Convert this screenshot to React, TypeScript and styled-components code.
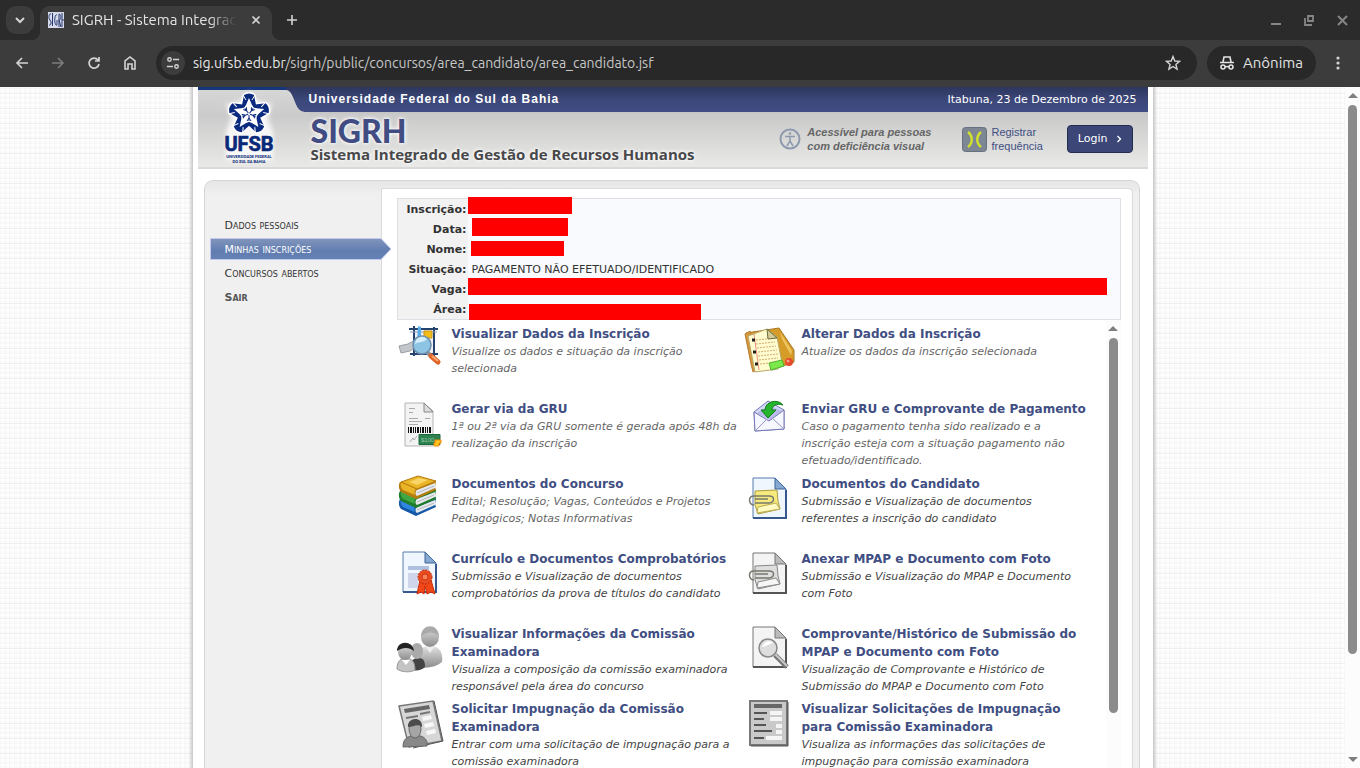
import React from 'react';
import styled, { createGlobalStyle, css } from 'styled-components';

const GlobalStyle = createGlobalStyle`
  * { box-sizing: border-box; }
  body { margin: 0; overflow: hidden; }
  button, input { font: inherit; margin: 0; }
`;

const ui = `Ubuntu, 'Noto Sans', sans-serif`;
const verdana = `Verdana, 'DejaVu Sans', sans-serif`;
const arial = `'Liberation Sans', Arial, sans-serif`;

const Window = styled.div`
  display: flex;
  flex-direction: column;
  height: 100vh;
  background: #3c3c3c;
`;

/* ---------- browser frame ---------- */

const TabStrip = styled.div`
  display: flex;
  align-items: flex-end;
  flex: none;
  height: 40px;
  padding: 0 4px 0 6px;
  background: #2b2b2b;
  font: 15px/20px ${ui};
`;

const IconButton = styled.button<{ $size?: number; $filled?: boolean; $color?: string }>`
  display: grid;
  place-items: center;
  flex: none;
  width: ${p => p.$size ?? 28}px;
  height: ${p => p.$size ?? 28}px;
  padding: 0;
  border: 0;
  border-radius: 10px;
  background: ${p => (p.$filled ? '#3c3c3c' : 'transparent')};
  color: ${p => p.$color ?? '#d4d4d4'};
`;

const StripCell = styled.div`
  display: flex;
  align-items: center;
  height: 40px;
`;

const Tab = styled.div`
  position: relative;
  display: flex;
  align-items: center;
  gap: 8px;
  width: 232px;
  height: 34px;
  margin: 0 6px;
  padding: 0 4px 6px 8px;
  border-radius: 10px 10px 0 0;
  background: #3c3c3c;
  color: #e3e3e3;

  &::before, &::after {
    content: '';
    position: absolute;
    bottom: 0;
    width: 10px;
    height: 10px;
  }
  &::before { left: -10px; background: radial-gradient(circle at 0 0, #2b2b2b 10px, #3c3c3c 11px); }
  &::after { right: -10px; background: radial-gradient(circle at 100% 0, #2b2b2b 10px, #3c3c3c 11px); }
`;

const TabTitle = styled.span`
  flex: 1;
  overflow: hidden;
  white-space: nowrap;
  mask-image: linear-gradient(90deg, #000 84%, transparent);
`;

const WindowButtons = styled(StripCell)`
  gap: 5px;
  margin-left: auto;
`;

const Toolbar = styled.div`
  display: flex;
  align-items: center;
  flex: none;
  gap: 8px;
  height: 47px;
  padding: 0 8px 2px;
  background: #3c3c3c;
  font: 14px/20px ${ui};
`;

const AddressBar = styled.div`
  display: flex;
  align-items: center;
  flex: 1;
  height: 34px;
  margin: 0 2px 0 4px;
  padding: 0 10px 0 5px;
  border-radius: 17px;
  background: #282828;
`;

const SiteButton = styled(IconButton)`
  width: 24px;
  height: 24px;
  border-radius: 12px;
`;

const Url = styled.span`
  flex: 1;
  margin-left: 8px;
  color: #c7c7c7;
  b { color: #e8e8e8; font-weight: 400; }
`;

const Incognito = styled.button`
  display: flex;
  align-items: center;
  gap: 8px;
  height: 34px;
  padding: 0 13px 0 12px;
  border: 0;
  border-radius: 17px;
  background: #282828;
  color: #e3e3e3;
  font-size: 15px;
`;

/* ---------- scroll bars ---------- */

const ScrollTrack = styled.div`
  display: flex;
  flex-direction: column;
  align-items: center;
  flex: none;
  width: 15px;
  padding: 6px 0;
  background: #fcfcfc;
`;

const ScrollThumb = styled.div<{ $share: number }>`
  flex: none;
  width: 9px;
  height: ${p => p.$share}%;
  margin: 7px 0 auto;
  border-radius: 5px;
  background: #8b8b8b;
`;

const Arrow = styled.div<{ $down?: boolean }>`
  border: 5px solid transparent;
  ${p => p.$down
    ? css`border-top-color: #7f7f7f; border-bottom: 0;`
    : css`border-bottom-color: #7f7f7f; border-top: 0;`}
`;

/* ---------- page ---------- */

const Page = styled.div`
  display: flex;
  flex: 1;
  min-height: 0;
`;

const Backdrop = styled.div`
  display: flex;
  justify-content: center;
  flex: 1;
  min-width: 0;
  overflow: hidden;
  background:
    repeating-linear-gradient(0deg, transparent 0 14px, rgba(0, 0, 0, .03) 14px 15px),
    repeating-linear-gradient(0deg, rgba(0, 0, 0, .012) 0 2px, transparent 2px 4px, rgba(0, 0, 0, .025) 4px 5px),
    repeating-linear-gradient(90deg, rgba(0, 0, 0, .012) 0 2px, transparent 2px 4px, rgba(0, 0, 0, .025) 4px 5px),
    #fff;
`;

const Sheet = styled.div`
  display: flex;
  flex-direction: column;
  width: 100%;
  max-width: 960px;
  padding: 0 5px;
  background: #fff;
  box-shadow: 0 0 3px 2px #c4c4c4;
`;

const Header = styled.header`
  display: grid;
  grid-template-columns: 111px 1fr;
  flex: none;
  height: 82px;
  border-bottom: 2px solid #dadada;
  background: linear-gradient(#bdbdbd 22px, #c9c9c9 27px, #e9e9e7);
`;

const LogoCorner = styled.svg`
  display: block;
  width: 111px;
  height: 80px;
`;

const HeaderMain = styled.div`
  display: flex;
  flex-direction: column;
  min-width: 0;
`;

const TopBar = styled.div`
  display: flex;
  justify-content: space-between;
  height: 25px;
  padding: 0 11px 0 0;
  background: linear-gradient(#2d365d, #3c4779 50%, #404c83);
  color: #fff;
`;

const University = styled.strong`
  font: bold 12px/25px ${arial};
  letter-spacing: 1px;
`;

const Today = styled.span`
  font: 11px/26px ${verdana};
`;

const Brand = styled.div`
  display: flex;
  align-items: flex-start;
  justify-content: space-between;
  padding: 0 15px 0 2px;
`;

const Titles = styled.div`
  color: #48484a;
  text-shadow: 0 0 3px #fff, 0 0 5px #fff;
  white-space: nowrap;
  h1 { margin: 0; font: 900 32px/38px Lato, sans-serif; color: #404c82; }
  p { margin: -6px 0 0; font: bold 15px/20px 'Open Sans', sans-serif; }
`;

const HeaderLinks = styled.div`
  display: flex;
  align-items: center;
  padding-top: 13px;
`;

const HeaderLink = styled.a<{ $strong?: boolean }>`
  display: flex;
  align-items: center;
  gap: ${p => (p.$strong ? 6 : 4)}px;
  margin-right: ${p => (p.$strong ? 31 : 24)}px;
  font: ${p => (p.$strong ? 'italic bold' : 'normal')} 11px/14px ${arial};
  color: ${p => (p.$strong ? '#666' : '#404e82')};
  text-decoration: none;
  white-space: nowrap;
`;

const LoginButton = styled.button`
  display: flex;
  align-items: center;
  gap: 5px;
  height: 28px;
  padding: 0 7px 0 10px;
  border: 1px solid #222b50;
  border-radius: 4px;
  background: #3c4778;
  color: #fff;
  font: 11px/14px ${verdana};
`;

const Panel = styled.div`
  display: flex;
  flex: 1;
  min-height: 0;
  margin: 11px 8px 0 6px;
  padding: 7px 6px 0 5px;
  border: 1px solid #d4d6d8;
  border-bottom: 0;
  border-radius: 9px 9px 0 0;
  background: linear-gradient(#e6e6e6, #f0f0f0 14px);
`;

const Sidebar = styled.nav`
  flex: none;
  width: 171px;
  padding-top: 26px;
  ul { margin: 0; padding: 0; list-style: none; }
`;

const MenuLink = styled.a<{ $active?: boolean; $strong?: boolean }>`
  display: block;
  position: relative;
  height: 24px;
  padding-left: 15px;
  font: ${p => (p.$strong ? 'bold' : 'normal')} 11px/24px ${verdana};
  font-variant: small-caps;
  color: ${p => (p.$active ? '#fff' : p.$strong ? '#555' : '#333')};
  text-decoration: none;
  svg { position: absolute; left: 0; top: 0; z-index: 0; }
  span { position: relative; }
`;

const Content = styled.main`
  display: flex;
  flex-direction: column;
  flex: 1;
  min-width: 0;
  padding: 9px 11px 0 15px;
  border: 1px solid #d9dadc;
  border-bottom: 0;
  border-radius: 0 5px 0 0;
  background: #fff;
`;

const Details = styled.table`
  flex: none;
  width: 100%;
  border: 1px solid #dcdfe4;
  border-collapse: separate;
  border-spacing: 0;
  background: #f9fafd;
  font: 11px/18px ${verdana};
  color: #333;
  th { width: 70px; padding: 2px 1px 0 0; background: #f2f2f3; text-align: right; }
  td { position: relative; height: 20px; padding: 2px 0 0 4px; }
`;

const Redaction = styled.span<{ $x: number; $y: number; $w: number; $h: number }>`
  position: absolute;
  left: ${p => p.$x}px;
  top: ${p => p.$y}px;
  width: ${p => p.$w}px;
  height: ${p => p.$h}px;
  background: #f00;
`;

const Operations = styled.section`
  display: flex;
  flex: 1;
  min-height: 0;
  margin-left: -4px;
`;

const OperationGrid = styled.div`
  display: grid;
  grid-template-columns: repeat(2, 350px);
  grid-auto-rows: 75px;
  flex: 1;
  min-width: 0;
  padding-top: 5px;
  overflow: hidden;
`;

const Operation = styled.article`
  display: flex;
  gap: 5px;
  padding-right: 2px;
  > svg { flex: none; }
`;

const OperationTitle = styled.h2`
  margin: 0;
  font: bold 12px/18px ${verdana};
  a { color: #404e82; text-decoration: none; }
`;

const Description = styled.p<{ $dark?: boolean }>`
  margin: 0;
  font: italic 11px/17px ${verdana};
  color: ${p => (p.$dark ? '#444' : '#666')};
`;

/* ---------- drawings ---------- */

const Line = ({ d, size = 16, w = 2 }: { d: string; size?: number; w?: number }) => (
  <svg width={size} height={size} viewBox="0 0 16 16" fill="none" stroke="currentColor" strokeWidth={w}>
    <path d={d} />
  </svg>
);

const Art = ({ children }: { children: React.ReactNode }) => (
  <svg width="54" height="50" viewBox="0 0 54 50" aria-hidden="true">{children}</svg>
);

const InspectArt = () => (
  <Art>
    <path d="M21 4h19v24H21z" fill="#eef1f7" />
    <path d="M21 1v30M16 4h29M17 29h28M41 2v30" stroke="#26426f" strokeWidth="2" fill="none" />
    <path d="M17 7h27" stroke="#8d9bb5" />
    <path d="M31 6h8v7h-8z" fill="#f5bd18" stroke="#c8961a" />
    <path d="M25 1l3 1v14l-4 1z" fill="#58aee8" />
    <path d="M6 21l9-2 7-4 4 5-9 6-9 2z" fill="#c3c7cc" stroke="#9aa0a7" />
    <path d="M34 27l5 5" stroke="#8b9095" strokeWidth="4" />
    <path d="M38 31l7 6" stroke="#e0642a" strokeWidth="5" strokeLinecap="round" />
    <path d="M39 31l6 5" stroke="#f9a86e" strokeWidth="2" />
    <circle cx="29" cy="20" r="9" fill="#8dc3e3" stroke="#6b8fac" strokeWidth="1.5" />
    <path d="M22 19a7 7 0 0 1 12-5c-3 4-7 2-12 5z" fill="#d3edfa" />
  </Art>
);

const BillArt = () => (
  <Art>
    <path d="M12 3h19l9 8v35H12z" fill="#f3f3f3" stroke="#b5b5b5" />
    <path d="M31 3v9h9z" fill="#ddd" stroke="#888" />
    <path d="M16 8.500h6M16 12.500h4M16 18.500h9M16 21.500h13M16 24.500h9M32 18.500h5" stroke="#aaa" />
    <path d="M15 27h1v6h-1zM17 27h2v6h-2zM20 27h1v6h-1zM22 27h1v6h-1zM24 27h2v6h-2zM27 27h1v6h-1zM29 27h2v6h-2zM32 27h1v6h-1zM34 27h1v6h-1zM36 27h2v6h-2z" fill="#111" />
    <path d="M17 42l3-4 1 2 3-4" stroke="#aaa" fill="none" />
    <path d="M26 34.500h21v10H26z" fill="#2f8150" stroke="#1b6a3b" />
    <text x="28" y="42" fontFamily="Liberation Sans" fontSize="6" fill="#8cc79e">$100</text>
    <path d="M42 40h6v3h-2v3h-5v-3h1z" fill="#ffc51c" stroke="#f18909" />
  </Art>
);

const BooksArt = () => {
  const book = (y: number, c: string, d: string) => (
    <g transform={`translate(0 ${y})`}>
      <path d="M7 6c-2 3-1 8 1 10l15 7 20-9-1-3 1-6z" fill={d} />
      <path d="M24 14l18-7v5l-18 8c-2-1-2-5 0-6z" fill="#e6e9ec" />
      <path d="M24 17l17-7" fill="none" stroke="#b5b9bd" />
      <path d="M8 6c-1 3 0 6 2 8l12 5c-1-2-1-4 1-6z" fill={c} />
      <path d="M8 6L25 0l18 5-19 8z" fill={c} stroke={d} />
    </g>
  );
  return (
    <Art>
      {book(18, '#2f86e0', '#1558a8')}
      {book(10, '#3fa843', '#1e7c2b')}
      {book(1, '#eab427', '#b57c0f')}
      <path d="M16 7l10-4 9 2-11 5z" fill="#f8d566" />
    </Art>
  );
};

const NotebookArt = () => (
  <Art>
    <path d="M3 8l33-5 15 22v12l-22 8z" fill="#d69c28" stroke="#a5762b" />
    <path d="M37 7l12 19-1 4-9-16z" fill="#eec560" />
    <path d="M2 9l5-3 8 38-5 3-2-8z" fill="#d8973b" stroke="#b57c31" />
    <path d="M5 11l19-7 10 8 5 26-4 6-23 3z" fill="#fffccf" stroke="#b8a66b" />
    <path d="M24 4l1 10 9-1z" fill="#d5cd97" stroke="#666b3a" />
    <path d="M13 15l11-1M13 19l19-2M14 23l19-2M15 27l19-2M15 31l20-2M16 35l19-2M17 39l9-1" stroke="#d8ae72" strokeDasharray="2 1" />
    <path d="M11 9l5 36" stroke="#f19083" />
    <path d="M9 15h3M10 27h3M12 39h3" stroke="#222" strokeWidth="3" />
    <path d="M26 38l13-3 2 6-13 4z" fill="#7ce84b" stroke="#4fb22f" />
    <circle cx="46" cy="37" r="4" fill="#e54a2e" />
    <circle cx="45" cy="36" r="1.500" fill="#f9a08c" />
  </Art>
);

const EnvelopeArt = () => (
  <Art>
    <path d="M11 12L25 1l16 9v19l-29 2z" fill="#d6d8f8" stroke="#7478b4" />
    <path d="M14 13l12-8 13 6-12 9z" fill="#b8bbe8" />
    <path d="M11 12l15 9 15-11v19l-29 2z" fill="#f7f7ff" stroke="#7478b4" />
    <path d="M12 31l12-12M41 29l-12-11" stroke="#9296c9" fill="none" />
    <path d="M40 5C36 0 27 0 23 6l-1 4h-4l7 8 8-8h-4c0-4 4-7 11-5z" fill="#25b42c" stroke="#137c1f" />
  </Art>
);

const FileSheet = ({ gray, top = 2 }: { gray?: boolean; top?: number }) => (
  <g transform={`translate(0 ${top - 2})`}>
    <path d="M10 3h22l11 11v29H10z" fill={gray ? '#f4f4f4' : '#f0f6fd'} stroke={gray ? '#777' : '#5478ad'} />
    <path d="M32 3v11h11z" fill={gray ? '#bbb' : '#86a9d2'} stroke={gray ? '#777' : '#3e659c'} />
    <path d="M43 15v28H10" fill="none" stroke={gray ? '#555' : '#36588e'} strokeWidth="2" />
  </g>
);

const ClipArt = ({ gray }: { gray?: boolean }) => (
  <Art>
    <FileSheet gray={gray} />
    <path d="M12 16l22-1 1 11 2 8-22 5-3-9z" fill={gray ? '#dedede' : '#f5ea7b'} stroke={gray ? '#888' : '#aa9d42'} />
    <path d="M14 38l23-4-4-6-18 4z" fill={gray ? '#f6f6f6' : '#fffac0'} stroke={gray ? '#888' : '#b9ac55'} />
    <path d="M12 28h14c6-1 6-7 0-7H11c-6 0-6 8 0 9M12 24h13" fill="none" stroke="#77796e" strokeWidth="1.500" />
  </Art>
);

const CertificateArt = () => (
  <Art>
    <FileSheet top={1} />
    <path d="M15 16h21v4H15z" fill="#afbfe0" />
    <path d="M15 23h10v15H15z" fill="#cfd5ea" />
    <path d="M27 30l-3 14 4-2 3 2 1-8 2 8 4-2 4 2-4-14z" fill="#f14718" stroke="#c52d0b" />
    <circle cx="32" cy="27" r="7" fill="#e94b20" stroke="#bd2c0c" strokeDasharray="2 1" />
    <circle cx="32" cy="27" r="3" fill="#f58556" stroke="#d23511" />
  </Art>
);

const PeopleArt = () => (
  <Art>
    <defs>
      <linearGradient id="person" x2="0" y2="1"><stop stopColor="#ddd" /><stop offset="1" stopColor="#8d8d8d" /></linearGradient>
    </defs>
    <path d="M22 38c-1-11 5-15 10-16h11c5 2 7 8 6 15-7 6-18 7-27 4z" fill="url(#person)" />
    <path d="M32 21l5 7 5-7z" fill="#eee" />
    <ellipse cx="37" cy="12" rx="9" ry="10" fill="url(#person)" />
    <path d="M28 11c1-13 17-13 18 0-7-5-11-4-18 0z" fill="#aaa" />
    <path d="M17 43c0-8 4-10 9-10s6 4 6 9c-4 4-11 5-15 1z" fill="#444" />
    <ellipse cx="24" cy="26" rx="6" ry="8" fill="#aaa" />
    <path d="M4 44c0-8 4-11 9-11s9 3 9 12c-5 3-14 2-18-1z" fill="#c4c4c4" stroke="#999" />
    <path d="M9 35l4 5 4-5z" fill="#fff" />
    <ellipse cx="12" cy="27" rx="7" ry="8" fill="url(#person)" />
    <path d="M4 26c0-11 16-11 17 0-5-4-11-4-17 0z" fill="#222" />
  </Art>
);

const SearchFileArt = () => (
  <Art>
    <FileSheet gray top={1} />
    <path d="M32 30l12 12" stroke="#777" strokeWidth="5" />
    <path d="M32 29l12 12" stroke="#c9c9c9" strokeWidth="2" />
    <circle cx="25" cy="23" r="9" fill="#ddd" stroke="#888" strokeWidth="1.500" />
    <path d="M19 22c2-6 8-7 11-4-4 1-6 3-11 4z" fill="#fff" />
  </Art>
);

const ProfileArt = () => (
  <Art>
    <path d="M6 6l34-5 9 40-33 6z" fill="#d7d7d7" stroke="#777" strokeWidth="1.500" />
    <path d="M41 1l9 40-30 7" fill="none" stroke="#555" />
    <path d="M11 9l25-4 1 4-25 4z" fill="#666" />
    <path d="M13 18l12-2M27 14l10-2" stroke="#777" strokeWidth="2" />
    <path d="M29 17l9-2 1 4-9 2zM31 24l9-2 1 4-9 2zM33 31l9-2 1 4-9 2z" fill="#f8f8f8" />
    <path d="M10 47c0-8 4-10 8-11h10c5 2 7 6 6 10z" fill="#888" stroke="#666" />
    <ellipse cx="22" cy="29" rx="6" ry="9" fill="#a5a5a5" stroke="#666" />
    <path d="M15 27c-1-10 15-11 14 0-4-4-9 0-14 0z" fill="#4c4c4c" />
  </Art>
);

const FormArt = () => (
  <Art>
    <path d="M7 1h37v44H7z" fill="#c9c9c9" stroke="#777" strokeWidth="2" />
    <path d="M45 2v44H8" fill="none" stroke="#555" />
    <path d="M11 4h28v4H11z" fill="#666" />
    <path d="M11 13h13M11 19h10M11 25h12M11 31h18M11 38h10" stroke="#555" strokeWidth="2" />
    <path d="M27 11h12v4H27zM27 17h12v4H27zM33 24h6v4h-6zM33 30h6v4h-6zM23 36h16v4H23z" fill="#f5f5f5" />
  </Art>
);

const UfsbCorner = () => (
  <LogoCorner viewBox="0 0 111 80" role="img" aria-label="UFSB">
    <defs>
      <linearGradient id="corner" x2="0" y2="1"><stop stopColor="#d8d8d8" /><stop offset=".35" stopColor="#cbcbcb" /><stop offset="1" stopColor="#e9e9e7" /></linearGradient>
      <linearGradient id="bar" x2="0" y2="1"><stop stopColor="#2d365d" /><stop offset=".5" stopColor="#3c4779" /><stop offset="1" stopColor="#404c83" /></linearGradient>
      <filter id="glow"><feGaussianBlur stdDeviation="2" /></filter>
    </defs>
    <path d="M0 0h111v80H0z" fill="url(#corner)" />
    <path d="M88 0h23v25h-2c-6 0-9-2-12-10-3-8-5-12-9-12z" fill="url(#bar)" />
    <path d="M0 0h88v3H0z" fill="#15357d" />
    <path d="M51 4l9 10 14 3-4 14 5 14v28H28V45l5-14-5-14 14-3z" fill="#fff" opacity=".8" filter="url(#glow)" />
    <g transform="translate(51 27)" strokeLinejoin="round">
      {[0, 72, 144, 216, 288].map(a => (
        <path key={a} transform={`rotate(${a})`} d="M-5-19Q0-22 5-19L7-9 0 0-7-9z" fill="#0a2a80" stroke="#fff" strokeWidth="3" />
      ))}
      {[0, 72, 144, 216, 288].map(a => (
        <g key={a} transform={`rotate(${a})`}>
          <path d="M-5-19Q0-22 5-19L7-9 0 0-7-9z" fill="#0a2a80" />
          <path d="M0-16L3-9 5-6 0-2-5-6-3-9z" fill="#fff" />
          <path d="M-6-19L-3-14M6-19L3-14" stroke="#fff" />
        </g>
      ))}
      <circle r="8" fill="#fff" />
      {[0, 72, 144, 216, 288].map(a => (
        <path key={a} transform={`rotate(${a + 36})`} d="M0-1v-6M-2-7l2 3 2-3" stroke="#0a2a80" fill="none" />
      ))}
    </g>
    <text x="51" y="64" textAnchor="middle" fontFamily="Liberation Sans Narrow, Roboto, sans-serif" fontWeight="700" fontSize="20" fill="#082878" stroke="#082878" strokeWidth=".6">UFSB</text>
    <text x="51" y="71" textAnchor="middle" fontFamily="Liberation Sans Narrow, Roboto, sans-serif" fontWeight="700" fontSize="4" fill="#082878">UNIVERSIDADE FEDERAL</text>
    <text x="51" y="76" textAnchor="middle" fontFamily="Liberation Sans Narrow, Roboto, sans-serif" fontWeight="700" fontSize="4" fill="#082878">DO SUL DA BAHIA</text>
  </LogoCorner>
);

/* ---------- data ---------- */

const details = [
  { label: 'Inscrição:', box: [0, -2, 104, 17] },
  { label: 'Data:', box: [4, -1, 96, 18] },
  { label: 'Nome:', box: [3, 2, 93, 15] },
  { label: 'Situação:', text: 'PAGAMENTO NÃO EFETUADO/IDENTIFICADO' },
  { label: 'Vaga:', box: [0, -1, 639, 17] },
  { label: 'Área:', box: [1, 5, 232, 16] },
];

const operations = [
  { art: <InspectArt />, title: 'Visualizar Dados da Inscrição', text: 'Visualize os dados e situação da inscrição selecionada' },
  { art: <NotebookArt />, title: 'Alterar Dados da Inscrição', text: 'Atualize os dados da inscrição selecionada' },
  { art: <BillArt />, title: 'Gerar via da GRU', text: '1ª ou 2ª via da GRU somente é gerada após 48h da realização da inscrição' },
  { art: <EnvelopeArt />, title: 'Enviar GRU e Comprovante de Pagamento', text: 'Caso o pagamento tenha sido realizado e a inscrição esteja com a situação pagamento não efetuado/identificado.' },
  { art: <BooksArt />, title: 'Documentos do Concurso', text: 'Edital; Resolução; Vagas, Conteúdos e Projetos Pedagógicos; Notas Informativas' },
  { art: <ClipArt />, title: 'Documentos do Candidato', text: 'Submissão e Visualização de documentos referentes a inscrição do candidato', dark: true },
  { art: <CertificateArt />, title: 'Currículo e Documentos Comprobatórios', text: 'Submissão e Visualização de documentos comprobatórios da prova de títulos do candidato', dark: true },
  { art: <ClipArt gray />, title: 'Anexar MPAP e Documento com Foto', text: 'Submissão e Visualização do MPAP e Documento com Foto', dark: true },
  { art: <PeopleArt />, title: 'Visualizar Informações da Comissão Examinadora', text: 'Visualiza a composição da comissão examinadora responsável pela área do concurso', dark: true },
  { art: <SearchFileArt />, title: 'Comprovante/Histórico de Submissão do MPAP e Documento com Foto', text: 'Visualização de Comprovante e Histórico de Submissão do MPAP e Documento com Foto', dark: true },
  { art: <ProfileArt />, title: 'Solicitar Impugnação da Comissão Examinadora', text: 'Entrar com uma solicitação de impugnação para a comissão examinadora', dark: true },
  { art: <FormArt />, title: 'Visualizar Solicitações de Impugnação para Comissão Examinadora', text: 'Visualiza as informações das solicitações de impugnação para comissão examinadora', dark: true },
];

const menu = [
  { label: 'Dados pessoais' },
  { label: 'Minhas inscrições', active: true },
  { label: 'Concursos abertos' },
  { label: 'Sair', strong: true },
];

export default function App() {
  return (
    <Window>
      <GlobalStyle />
      <TabStrip>
        <StripCell><IconButton $filled aria-label="Pesquisar guias"><Line d="M4 6l4 4 4-4" /></IconButton></StripCell>
        <Tab>
          <svg width="16" height="16" viewBox="0 0 16 16">
            <path d="M0 0h16v16H0z" fill="#d5d9ea" />
            <path d="M3 2C1 1 0 6 2 8s1 6-1 5M4.500 1v13M9 3C6 1 6 15 9 13V8M11 15V2c3 1 2 6 0 6l2 7M14 1v14M14 8h2" fill="none" stroke="#27386e" />
          </svg>
          <TabTitle>SIGRH - Sistema Integrado</TabTitle>
          <IconButton $size={24} aria-label="Fechar guia"><Line size={14} d="M4 4l8 8M12 4l-8 8" /></IconButton>
        </Tab>
        <StripCell><IconButton aria-label="Nova guia"><Line d="M8 3v10M3 8h10" w={1.6} /></IconButton></StripCell>
        <WindowButtons>
          <IconButton $color="#868686" aria-label="Minimizar"><Line d="M3 12h10" /></IconButton>
          <IconButton $color="#868686" aria-label="Restaurar"><Line d="M7 4h5v5H7zM4 6v7h7" w={1.8} /></IconButton>
          <IconButton $color="#868686" aria-label="Fechar"><Line d="M4 4l9 9M13 4l-9 9" /></IconButton>
        </WindowButtons>
      </TabStrip>
      <Toolbar>
        <IconButton aria-label="Voltar"><Line d="M14 8H3M8 3L3 8l5 5" w={1.6} /></IconButton>
        <IconButton $color="#7c7c7c" aria-label="Avançar"><Line d="M2 8h11M8 3l5 5-5 5" w={1.6} /></IconButton>
        <IconButton aria-label="Recarregar"><Line d="M12 5a5 5 0 1 0 1 4M13 2v4H9" w={1.7} /></IconButton>
        <IconButton aria-label="Início"><Line d="M3 14V6l5-4 5 4v8h-3v-5H6v5z" w={1.6} /></IconButton>
        <AddressBar>
          <SiteButton $filled aria-label="Informações do site">
            <Line d="M2 4a2 2 0 1 0 4 0a2 2 0 1 0-4 0M8 4h7M1 12h7M10 12a2 2 0 1 0 4 0a2 2 0 1 0-4 0" size={14} w={1.6} />
          </SiteButton>
          <Url><b>sig.ufsb.edu.br</b>/sigrh/public/concursos/area_candidato/area_candidato.jsf</Url>
          <IconButton aria-label="Favoritar"><Line d="M8 1.500l1.800 4.500 4.700.4-3.600 3 1.200 4.700L8 11.500l-4.100 2.600 1.200-4.700-3.600-3 4.700-.4z" w={1.4} /></IconButton>
        </AddressBar>
        <Incognito>
          <Line d="M4 7l1-5h6l1 5M1 7.500h14M2 12a2 2 0 1 0 4 0a2 2 0 1 0-4 0M6 12q2-1 4 0a2 2 0 1 0 4 0a2 2 0 1 0-4 0" w={1.6} />
          Anônima
        </Incognito>
        <IconButton aria-label="Menu">
          <svg width="16" height="16" fill="currentColor"><circle cx="8" cy="3" r="1.600" /><circle cx="8" cy="8" r="1.600" /><circle cx="8" cy="13" r="1.600" /></svg>
        </IconButton>
      </Toolbar>

      <Page>
        <Backdrop>
          <Sheet>
            <Header>
              <UfsbCorner />
              <HeaderMain>
                <TopBar>
                  <University>Universidade Federal do Sul da Bahia</University>
                  <Today>Itabuna, 23 de Dezembro de 2025</Today>
                </TopBar>
                <Brand>
                  <Titles>
                    <h1>SIGRH</h1>
                    <p>Sistema Integrado de Gestão de Recursos Humanos</p>
                  </Titles>
                  <HeaderLinks>
                    <HeaderLink $strong href="#acessivel">
                      <svg width="22" height="22" viewBox="0 0 22 22" fill="none" stroke="#8d9aae" strokeWidth="2">
                        <circle cx="11" cy="11" r="9.500" />
                        <circle cx="11" cy="5.500" r="1.200" fill="#8d9aae" stroke="none" />
                        <path d="M6 8.500h10M11 8v5l-3 5M11 13l3 5" strokeWidth="1.500" />
                      </svg>
                      <span>Acessível para pessoas<br />com deficiência visual</span>
                    </HeaderLink>
                    <HeaderLink href="#frequencia">
                      <svg width="25" height="25" viewBox="0 0 25 25">
                        <rect x=".5" y=".5" width="24" height="24" rx="3" fill="#7d8794" stroke="#667080" />
                        <path d="M6 5c5 4 5 11 0 15M19 5c-5 4-5 11 0 15" fill="none" stroke="#d3e12c" strokeWidth="2.400" />
                      </svg>
                      <span>Registrar<br />frequência</span>
                    </HeaderLink>
                    <LoginButton>Login<Line size={12} d="M6 4l4 4-4 4" w={1.8} /></LoginButton>
                  </HeaderLinks>
                </Brand>
              </HeaderMain>
            </Header>

            <Panel>
              <Sidebar>
                <ul>
                  {menu.map(m => (
                    <li key={m.label}>
                      <MenuLink href="#menu" $active={m.active} $strong={m.strong}>
                        {m.active && (
                          <svg width="182" height="22" viewBox="0 0 182 22">
                            <defs><linearGradient id="sel" x2="0" y2="1"><stop stopColor="#8296bc" /><stop offset=".6" stopColor="#617cb0" /><stop offset="1" stopColor="#6681b4" /></linearGradient></defs>
                            <path d="M.5 .5H171l10 10.500-10 10.500H.5z" fill="url(#sel)" stroke="#c3c9ee" />
                          </svg>
                        )}
                        <span>{m.label}</span>
                      </MenuLink>
                    </li>
                  ))}
                </ul>
              </Sidebar>
              <Content>
                <Details>
                  <tbody>
                    {details.map(d => (
                      <tr key={d.label}>
                        <th scope="row">{d.label}</th>
                        <td>
                          {d.text}
                          {d.box && <Redaction $x={d.box[0]} $y={d.box[1]} $w={d.box[2]} $h={d.box[3]} />}
                        </td>
                      </tr>
                    ))}
                  </tbody>
                </Details>
                <Operations>
                  <OperationGrid>
                    {operations.map(o => (
                      <Operation key={o.title}>
                        {o.art}
                        <div>
                          <OperationTitle><a href="#operacao">{o.title}</a></OperationTitle>
                          <Description $dark={o.dark}>{o.text}</Description>
                        </div>
                      </Operation>
                    ))}
                  </OperationGrid>
                  <ScrollTrack><Arrow /><ScrollThumb $share={86} /></ScrollTrack>
                </Operations>
              </Content>
            </Panel>
          </Sheet>
        </Backdrop>
        <ScrollTrack><Arrow /><ScrollThumb $share={82} /><Arrow $down /></ScrollTrack>
      </Page>
    </Window>
  );
}
